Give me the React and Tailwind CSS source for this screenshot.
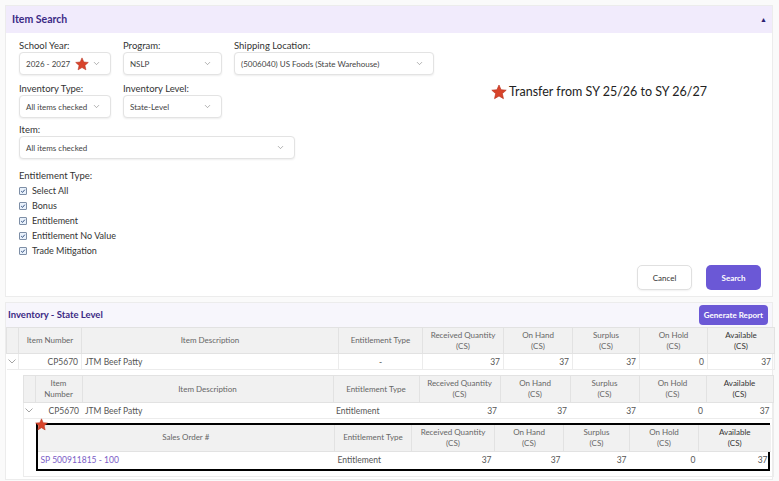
import React from 'react'
import { ChevronDown } from 'lucide-react'

const FONT = { fontFamily: 'Lato, "Open Sans", sans-serif' }

const Star = ({ size = 14, className = '' }) => (
  <svg width={size} height={size} viewBox="0 0 24 24" className={className}>
    <polygon
      points="12,1.5 15.1,8.6 22.8,9.3 17,14.4 18.7,22 12,18 5.3,22 7,14.4 1.2,9.3 8.9,8.6"
      fill="#d8442b"
      stroke="#b93420"
      strokeWidth="1"
      strokeLinejoin="round"
    />
  </svg>
)

const Select = ({ label, value, width, star }) => (
  <div className="flex flex-col" style={{ width }}>
    <div className="text-[9.5px] leading-[13px] text-[#333]">{label}</div>
    <div className="flex h-[23px] items-center justify-between rounded-[4px] border border-[#e3e3e3] bg-white pl-[6px] pr-[9px] text-[8px] text-[#444] shadow-[0_1px_2px_rgba(0,0,0,0.07)]">
      <span className="flex items-center gap-[5px]">
        {value}
        {star && <Star size={14} />}
      </span>
      <ChevronDown size={9} strokeWidth={1.5} className="text-[#777]" />
    </div>
  </div>
)

const Check = ({ label }) => (
  <div className="flex h-[15px] items-center gap-[5px] text-[9px] text-[#333]">
    <span className="flex h-[8px] w-[8px] items-center justify-center rounded-[1px] border border-[#7d8ea6] bg-[#e9f1fb]">
      <svg width="6" height="6" viewBox="0 0 10 10">
        <path d="M2 5.2 L4.2 7.3 L8 2.8" fill="none" stroke="#2b4a7a" strokeWidth="1.6" />
      </svg>
    </span>
    {label}
  </div>
)

const topCols = [12, 63, 257, 84, 81, 69, 67, 68, 67]
const nestCols = [12, 47, 251, 86, 81, 70, 69, 67, 67]
const salesCols = [297, 77, 83, 69, 66, 69, 73]

const Th = ({ children, bold, className = '' }) => (
  <th
    className={`border border-[#e2e2e2] px-[3px] text-center text-[8px] font-normal leading-[11px] ${
      bold ? 'font-bold text-[#333]' : 'text-[#666]'
    } ${className}`}
  >
    {children}
  </th>
)

const Td = ({ children, align = 'right', className = '' }) => (
  <td
    className={`border border-[#ececec] px-[3px] text-[8.5px] leading-[14px] text-[#555] ${
      align === 'right' ? 'text-right' : align === 'center' ? 'text-center' : 'text-left'
    } ${className}`}
  >
    {children}
  </td>
)

const QtyHeads = () => (
  <>
    <Th>Received Quantity<br />(CS)</Th>
    <Th>On Hand<br />(CS)</Th>
    <Th>Surplus<br />(CS)</Th>
    <Th>On Hold<br />(CS)</Th>
    <Th bold>Available<br />(CS)</Th>
  </>
)

const Qty = () => (
  <>
    <Td>37</Td>
    <Td>37</Td>
    <Td>37</Td>
    <Td>0</Td>
    <Td>37</Td>
  </>
)

const Caret = () => (
  <svg width="8" height="5" viewBox="0 0 8 5" className="mx-auto">
    <path d="M0.5 0.5 L4 4 L7.5 0.5" fill="none" stroke="#9a9a9a" strokeWidth="0.9" />
  </svg>
)

export default function App() {
  return (
    <div className="min-h-[481px] w-[779px] bg-[#fafafa] pt-[5px]" style={FONT}>
      {/* Item Search */}
      <div className="ml-[5px] w-[768px] border border-[#ececec] bg-white">
        <div className="flex h-[27px] items-center justify-between bg-[#f1ebfc] pl-[6px] pr-[5px]">
          <span className="text-[10.5px] font-bold text-[#3b2a85]">Item Search</span>
          <span className="text-[7px] text-[#2d2070]">▲</span>
        </div>
        <div className="flex flex-col pl-[13px] pr-[11px] pt-[6px] pb-[6px]">
          <div className="flex gap-[12px]">
            <Select label="School Year:" value="2026 - 2027" width={92} star />
            <Select label="Program:" value="NSLP" width={99} />
            <Select label="Shipping Location:" value="(5006040) US Foods (State Warehouse)" width={200} />
          </div>
          <div className="mt-[7px] flex items-start gap-[12px]">
            <Select label="Inventory Type:" value="All items checked" width={92} />
            <Select label="Inventory Level:" value="State-Level" width={99} />
            <div className="ml-[257px] mt-[1px] flex items-center gap-[2px] text-[12.5px] text-[#222]">
              <Star size={16} />
              Transfer from SY 25/26 to SY 26/27
            </div>
          </div>
          <div className="mt-[5px]">
            <Select label="Item:" value="All items checked" width={276} />
          </div>
          <div className="mt-[11px] text-[9.5px] leading-[12px] text-[#333]">Entitlement Type:</div>
          <div className="mt-[1px] flex flex-col">
            <Check label="Select All" />
            <Check label="Bonus" />
            <Check label="Entitlement" />
            <Check label="Entitlement No Value" />
            <Check label="Trade Mitigation" />
          </div>
          <div className="mt-[7px] flex justify-end gap-[14px]">
            <button className="h-[25px] w-[55px] rounded-[5px] border border-[#e0e0e0] bg-white text-[8px] text-[#333] shadow-[0_1px_2px_rgba(0,0,0,0.06)]">
              Cancel
            </button>
            <button className="h-[25px] w-[55px] rounded-[5px] bg-[#6b58d6] text-[8px] font-bold text-white">
              Search
            </button>
          </div>
        </div>
      </div>

      {/* Inventory */}
      <div className="ml-[5px] mt-[5px] w-[768px] border border-[#ececec] bg-white">
        <div className="flex h-[24px] items-center justify-between bg-[#f7f6fc] pl-[2px] pr-[4px]">
          <span className="text-[9.5px] font-bold text-[#3b2a85]">Inventory - State Level</span>
          <button className="h-[20px] rounded-[4px] bg-[#6b58d6] px-[5px] text-[8px] font-bold text-white">
            Generate Report
          </button>
        </div>
        <table className="w-[766px] table-fixed border-collapse">
          <colgroup>
            {topCols.map((w, i) => (
              <col key={i} style={{ width: w }} />
            ))}
          </colgroup>
          <thead>
            <tr className="h-[26px] bg-[#f1f1f1]">
              <Th />
              <Th>Item Number</Th>
              <Th>Item Description</Th>
              <Th>Entitlement Type</Th>
              <QtyHeads />
            </tr>
          </thead>
          <tbody>
            <tr className="h-[16px]">
              <td className="border-b border-[#ececec]"><Caret /></td>
              <Td>CP5670</Td>
              <Td align="left">JTM Beef Patty</Td>
              <Td align="center">-</Td>
              <Qty />
            </tr>
            <tr>
              <td colSpan={9} className="pl-[16px] pr-[1px] pt-[5px] pb-[2px]">
                <table className="w-[750px] table-fixed border-collapse">
                  <colgroup>
                    {nestCols.map((w, i) => (
                      <col key={i} style={{ width: w }} />
                    ))}
                  </colgroup>
                  <thead>
                    <tr className="h-[27px] bg-[#f1f1f1]">
                      <Th />
                      <Th>Item<br />Number</Th>
                      <Th>Item Description</Th>
                      <Th>Entitlement Type</Th>
                      <QtyHeads />
                    </tr>
                  </thead>
                  <tbody>
                    <tr className="h-[16px]">
                      <td className="border-b border-l border-[#ececec]"><Caret /></td>
                      <Td className="border-x-0">CP5670</Td>
                      <Td align="left" className="border-x-0">JTM Beef Patty</Td>
                      <Td align="left" className="border-x-0">Entitlement</Td>
                      <Td className="border-x-0">37</Td>
                      <Td className="border-x-0">37</Td>
                      <Td className="border-x-0">37</Td>
                      <Td className="border-x-0">0</Td>
                      <Td className="border-l-0">37</Td>
                    </tr>
                    <tr>
                      <td colSpan={9} className="relative border border-[#ececec] pl-[12px] pr-[2px] pt-[4px] pb-[5px]">
                        <Star size={13} className="absolute left-[11px] top-[-1px]" />
                        <div className="w-[734px] border-2 border-black">
                          <table className="w-[730px] table-fixed border-collapse">
                            <colgroup>
                              {salesCols.map((w, i) => (
                                <col key={i} style={{ width: i === 6 ? w - 1 : w }} />
                              ))}
                            </colgroup>
                            <thead>
                              <tr className="h-[26px] bg-[#f1f1f1]">
                                <Th className="border-t-0 border-l-0">Sales Order #</Th>
                                <Th className="border-t-0">Entitlement Type</Th>
                                <Th className="border-t-0">Received Quantity<br />(CS)</Th>
                                <Th className="border-t-0">On Hand<br />(CS)</Th>
                                <Th className="border-t-0">Surplus<br />(CS)</Th>
                                <Th className="border-t-0">On Hold<br />(CS)</Th>
                                <Th bold className="border-t-0 border-r-0">Available<br />(CS)</Th>
                              </tr>
                            </thead>
                            <tbody>
                              <tr className="h-[18px]">
                                <td className="px-[3px] text-[8.5px] text-[#7a5cc6]">SP 500911815 - 100</td>
                                <td className="px-[3px] text-[8.5px] text-[#555]">Entitlement</td>
                                <td className="px-[3px] text-right text-[8.5px] text-[#555]">37</td>
                                <td className="px-[3px] text-right text-[8.5px] text-[#555]">37</td>
                                <td className="px-[3px] text-right text-[8.5px] text-[#555]">37</td>
                                <td className="px-[3px] text-right text-[8.5px] text-[#555]">0</td>
                                <td className="px-[3px] text-right text-[8.5px] text-[#555]">37</td>
                              </tr>
                            </tbody>
                          </table>
                        </div>
                      </td>
                    </tr>
                  </tbody>
                </table>
              </td>
            </tr>
          </tbody>
        </table>
      </div>
    </div>
  )
}
